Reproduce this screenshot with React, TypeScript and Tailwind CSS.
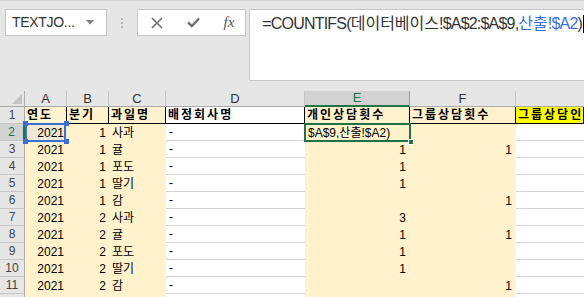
import React from "react";

const FONT = { fontFamily: '"Liberation Sans", "Noto Sans CJK KR", sans-serif' };

type Row = { n: number; a: string; b: string; c: string; e: string; f: string };

const rows: Row[] = [
  { n: 3, a: "2021", b: "1", c: "귤", e: "1", f: "1" },
  { n: 4, a: "2021", b: "1", c: "포도", e: "1", f: "" },
  { n: 5, a: "2021", b: "1", c: "딸기", e: "1", f: "" },
  { n: 6, a: "2021", b: "1", c: "감", e: "", f: "1" },
  { n: 7, a: "2021", b: "2", c: "사과", e: "3", f: "" },
  { n: 8, a: "2021", b: "2", c: "귤", e: "1", f: "1" },
  { n: 9, a: "2021", b: "2", c: "포도", e: "1", f: "" },
  { n: 10, a: "2021", b: "2", c: "딸기", e: "1", f: "" },
  { n: 11, a: "2021", b: "2", c: "감", e: "", f: "1" },
];

const Handle = ({ className }: { className: string }) => (
  <div className={`absolute w-[5px] h-[5px] bg-[#3c6fd2] ${className}`} />
);

const FormulaBar = () => (
  <div className="h-[91px] bg-[#e6e6e6] border-t border-[#d6d6d6] flex items-start pt-[8px] pl-[5px]">
    {/* Name box */}
    <div className="w-[102px] h-[27px] bg-white border border-[#c6c6c6] flex items-center justify-between pl-[6px] pr-[12px]">
      <span className="text-[14px] text-[#333] tracking-[-0.3px]">TEXTJO...</span>
      <svg width="8" height="5" viewBox="0 0 8 5">
        <path d="M0 0 L8 0 L4 4.5 Z" fill="#7a7a7a" />
      </svg>
    </div>
    <div className="w-[30px] h-[27px] flex flex-col items-center justify-center gap-[2px]">
      <div className="w-[2px] h-[2px] bg-[#b3b3b3]" />
      <div className="w-[2px] h-[2px] bg-[#b3b3b3]" />
      <div className="w-[2px] h-[2px] bg-[#b3b3b3]" />
    </div>
    {/* Cancel / enter / fx */}
    <div className="w-[110px] h-[27px] bg-white border border-[#c6c6c6] flex items-center pl-[13px] gap-[24px]">
      <svg width="12" height="12" viewBox="0 0 12 12">
        <path d="M1 1 L11 11 M11 1 L1 11" stroke="#707070" strokeWidth="1.6" />
      </svg>
      <svg width="13" height="11" viewBox="0 0 13 11">
        <path d="M1 5.5 L4.8 9 L12 1.5" stroke="#707070" strokeWidth="2.4" fill="none" />
      </svg>
      <span
        className="text-[15px] italic text-[#555]"
        style={{ fontFamily: '"Liberation Serif", serif' }}
      >
        fx
      </span>
    </div>
    {/* Formula */}
    <div className="ml-[3px] flex-1 h-[72px] bg-white border-l border-t border-b border-[#c6c6c6] pl-[12px] pt-[3px]">
      <div className="text-[16px] leading-[22px] text-[#333] whitespace-nowrap flex items-center">
        <span className="tracking-[-0.8px]">=COUNTIFS(</span>
        <span>데이터베이스</span>
        <span className="tracking-[-0.8px]">!$A$2:$A$9,</span>
        <span className="text-[#3b6fd6]">산출</span>
        <span className="text-[#3b6fd6] tracking-[-0.8px]">!$A2</span>
        <span className="tracking-[-0.8px]">)</span>
        <span className="inline-block w-[1px] h-[18px] bg-black ml-[1px]" />
      </div>
    </div>
  </div>
);

const ColHeader = ({ w, label, sel }: { w: string; label: string; sel?: boolean }) => (
  <div
    className={`${w} h-full flex items-center justify-center text-[13px] border-r ${
      sel
        ? "bg-[#d2d2d2] text-[#217346] border-[#9b9b9b] border-b-2 border-b-[#217346]"
        : "bg-[#e6e6e6] text-[#333] border-[#c6c6c6] border-b border-b-[#ababab]"
    }`}
  >
    {label}
  </div>
);

const RowHead = ({ n, sel }: { n?: number; sel?: boolean }) => (
  <div
    className={`w-[25px] h-full flex items-center justify-center text-[12px] border-b border-[#c6c6c6] ${
      sel
        ? "bg-[#d2d2d2] text-[#217346] border-r-2 border-r-[#217346]"
        : "bg-[#e6e6e6] text-[#444] border-r border-r-[#ababab]"
    }`}
  >
    {n}
  </div>
);

const HeadCell = ({ w, text, bg }: { w: string; text: string; bg: string }) => (
  <div
    className={`${w} h-full ${bg} border-r border-b border-black flex items-center pl-[2px] overflow-hidden whitespace-nowrap text-[12px] font-bold tracking-[2px] text-black`}
  >
    {text}
  </div>
);

export default function App() {
  return (
    <div className="w-[584px] h-[297px] overflow-hidden bg-white" style={FONT}>
      <FormulaBar />

      {/* column headers */}
      <div className="flex h-[16px]">
        <div className="w-[25px] h-full bg-[#e6e6e6] border-r border-b border-[#ababab] relative">
          <svg className="absolute right-[2px] bottom-[2px]" width="10" height="10" viewBox="0 0 10 10">
            <path d="M10 0 L10 10 L0 10 Z" fill="#c4c4c4" />
          </svg>
        </div>
        <ColHeader w="w-[42px]" label="A" />
        <ColHeader w="w-[42px]" label="B" />
        <ColHeader w="w-[57px]" label="C" />
        <ColHeader w="w-[139px]" label="D" />
        <ColHeader w="w-[105px]" label="E" sel />
        <ColHeader w="w-[106px]" label="F" />
        <div className="flex-1 h-full bg-[#e6e6e6] border-b border-[#ababab]" />
      </div>

      {/* row 1 */}
      <div className="flex h-[17px]">
        <RowHead n={1} />
        <HeadCell w="w-[42px]" text="연도" bg="bg-[#fff2cc]" />
        <HeadCell w="w-[42px]" text="분기" bg="bg-[#fff2cc]" />
        <HeadCell w="w-[57px]" text="과일명" bg="bg-[#fff2cc]" />
        <HeadCell w="w-[139px]" text="배정회사명" bg="bg-white" />
        <HeadCell w="w-[105px]" text="개인상담횟수" bg="bg-[#fff2cc]" />
        <HeadCell w="w-[106px]" text="그룹상담횟수" bg="bg-[#fff2cc]" />
        <HeadCell w="flex-1" text="그룹상담인원" bg="bg-[#ffff00]" />
      </div>

      {/* row 2: selected / editing */}
      <div className="flex h-[17px] text-[12px] text-black">
        <RowHead n={2} sel />
        <div className="w-[42px] h-full bg-[#efe8d2] relative flex items-center justify-end pr-[3px]">
          2021
          <div className="absolute left-0 right-[1px] top-[-1px] bottom-[-1px] border-2 border-[#3c6fd2]" />
          <Handle className="left-[-2px] top-[-3px]" />
          <Handle className="right-[-2px] top-[-3px]" />
          <Handle className="left-[-2px] bottom-[-3px]" />
          <Handle className="right-[-2px] bottom-[-3px]" />
        </div>
        <div className="w-[42px] h-full bg-[#fff2cc] flex items-center justify-end pr-[3px]">1</div>
        <div className="w-[57px] h-full bg-[#fff2cc] flex items-center pl-[3px]">사과</div>
        <div className="w-[139px] h-full bg-white border-b border-[#d4d4d4] flex items-center pl-[3px]">-</div>
        <div className="w-[105px] h-full bg-[#fff2cc] relative flex items-center pl-[3px] whitespace-nowrap">
          $A$9,산출!$A2)
          <div className="absolute left-[-1px] right-[-1px] top-[-1px] bottom-[-1px] border-2 border-[#217346]" />
          <div className="absolute right-[-4px] bottom-[-4px] w-[6px] h-[6px] bg-[#217346] border border-white" />
        </div>
        <div className="w-[106px] h-full bg-[#fff2cc]" />
        <div className="flex-1 h-full bg-white border-b border-[#d4d4d4]" />
      </div>

      {rows.map((r) => (
        <div key={r.n} className="flex h-[17px] text-[12px] text-black">
          <RowHead n={r.n} />
          <div className="w-[42px] h-full bg-[#fff2cc] flex items-center justify-end pr-[3px]">{r.a}</div>
          <div className="w-[42px] h-full bg-[#fff2cc] flex items-center justify-end pr-[3px]">{r.b}</div>
          <div className="w-[57px] h-full bg-[#fff2cc] flex items-center pl-[3px]">{r.c}</div>
          <div className="w-[139px] h-full bg-white border-b border-[#d4d4d4] flex items-center pl-[3px]">-</div>
          <div className="w-[105px] h-full bg-[#fff2cc] flex items-center justify-end pr-[4px]">{r.e}</div>
          <div className="w-[106px] h-full bg-[#fff2cc] flex items-center justify-end pr-[4px]">{r.f}</div>
          <div className="flex-1 h-full bg-white border-b border-[#d4d4d4]" />
        </div>
      ))}

      {/* row 12 (just peeking) */}
      <div className="flex h-[17px]">
        <RowHead />
        <div className="w-[42px] h-full bg-[#fff2cc]" />
        <div className="w-[42px] h-full bg-[#fff2cc]" />
        <div className="w-[57px] h-full bg-[#fff2cc]" />
        <div className="w-[139px] h-full bg-white" />
        <div className="w-[105px] h-full bg-[#fff2cc]" />
        <div className="w-[106px] h-full bg-[#fff2cc]" />
        <div className="flex-1 h-full bg-white" />
      </div>
    </div>
  );
}
